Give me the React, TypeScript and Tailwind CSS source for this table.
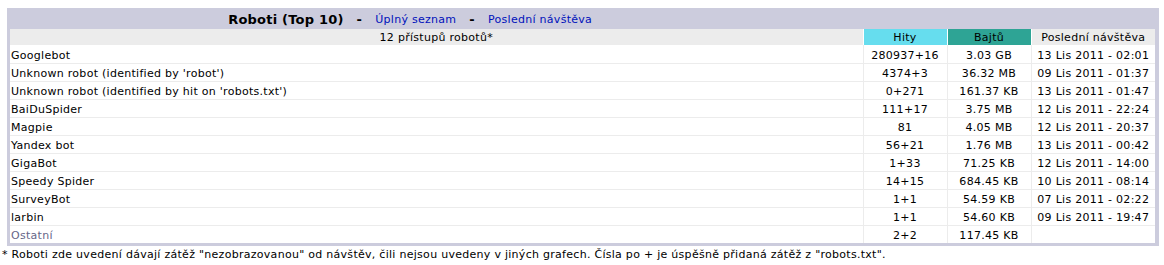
import React from 'react';

interface RobotRow {
  name: string;
  hits: string;
  bytes: string;
  last: string;
  other?: boolean;
}

const ROWS: RobotRow[] = [
  { name: 'Googlebot', hits: '280937+16', bytes: '3.03 GB', last: '13 Lis 2011 - 02:01' },
  { name: "Unknown robot (identified by 'robot')", hits: '4374+3', bytes: '36.32 MB', last: '09 Lis 2011 - 01:37' },
  { name: "Unknown robot (identified by hit on 'robots.txt')", hits: '0+271', bytes: '161.37 KB', last: '13 Lis 2011 - 01:47' },
  { name: 'BaiDuSpider', hits: '111+17', bytes: '3.75 MB', last: '12 Lis 2011 - 22:24' },
  { name: 'Magpie', hits: '81', bytes: '4.05 MB', last: '12 Lis 2011 - 20:37' },
  { name: 'Yandex bot', hits: '56+21', bytes: '1.76 MB', last: '13 Lis 2011 - 00:42' },
  { name: 'GigaBot', hits: '1+33', bytes: '71.25 KB', last: '12 Lis 2011 - 14:00' },
  { name: 'Speedy Spider', hits: '14+15', bytes: '684.45 KB', last: '10 Lis 2011 - 08:14' },
  { name: 'SurveyBot', hits: '1+1', bytes: '54.59 KB', last: '07 Lis 2011 - 02:22' },
  { name: 'larbin', hits: '1+1', bytes: '54.60 KB', last: '09 Lis 2011 - 19:47' },
  { name: 'Ostatní', hits: '2+2', bytes: '117.45 KB', last: '', other: true },
];

const font = "font-['DejaVu_Sans','Liberation_Sans',sans-serif]";

export default function App() {
  return (
    <div className={`w-[1164px] h-[265px] bg-white text-[11px] tracking-[0.28px] text-black ${font}`}>
      <div className="pt-[8px] pl-[7px] pr-[5px]">
        <div className="bg-[#CCCCDD] pl-[3px] pr-[4px] pb-[3px]">
          {/* title bar */}
          <div className="flex h-[21px] -ml-[3px] -mr-[4px]">
            <div className="w-[70%] flex items-center justify-center gap-[13px] leading-none pt-[2px]">
              <span className="text-[13px] font-bold tracking-[0.2px]">Roboti (Top 10)</span>
              <span className="text-[13px] font-bold">-</span>
              <span className="text-[#0011BB]">Úplný seznam</span>
              <span className="text-[13px] font-bold">-</span>
              <span className="text-[#0011BB]">Poslední návštěva</span>
            </div>
          </div>

          <table className="w-full border-collapse bg-white table-fixed">
            <colgroup>
              <col />
              <col className="w-[84px]" />
              <col className="w-[84px]" />
              <col className="w-[124px]" />
            </colgroup>
            <thead>
              <tr className="h-[16px] leading-none">
                <th className="bg-[#ECECEC] font-normal text-center border-r border-white pt-[1px]">12 přístupů robotů*</th>
                <th className="bg-[#66DDEE] font-normal text-center border-r border-white pt-[1px]">Hity</th>
                <th className="bg-[#2EA495] font-normal text-center border-r border-white pt-[1px]">Bajtů</th>
                <th className="bg-[#ECECEC] font-normal text-center pt-[1px]">Poslední návštěva</th>
              </tr>
            </thead>
            <tbody>
              {ROWS.map((r, i) => (
                <tr key={r.name} className={`h-[18px] leading-none ${i < ROWS.length - 1 ? 'border-b border-[#ECECEC]' : ''}`}>
                  <td className={`pl-[1px] pt-[3px] text-left border-r border-[#ECECEC] ${r.other ? 'text-[#666688]' : ''}`}>{r.name}</td>
                  <td className="pt-[3px] text-center border-r border-[#ECECEC]">{r.hits}</td>
                  <td className="pt-[3px] text-center border-r border-[#ECECEC]">{r.bytes}</td>
                  <td className="pt-[3px] text-center">{r.last}</td>
                </tr>
              ))}
            </tbody>
          </table>
        </div>
      </div>
      <div className="pl-[2px] pt-[2px] leading-[14px]">
        * Roboti zde uvedení dávají zátěž "nezobrazovanou" od návštěv, čili nejsou uvedeny v jiných grafech. Čísla po + je úspěšně přidaná zátěž z "robots.txt".
      </div>
    </div>
  );
}
